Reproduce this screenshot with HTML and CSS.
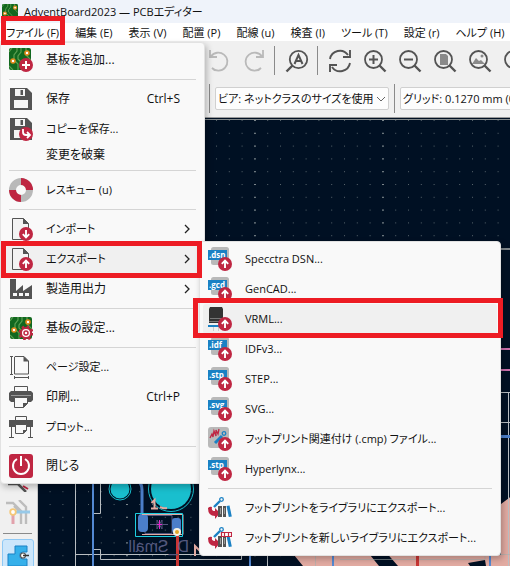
FILE: index.html
```html
<!DOCTYPE html>
<html lang="ja">
<head>
<meta charset="utf-8">
<meta name="viewport" content="width=device-width, initial-scale=1">
<title>AdventBoard2023 — PCBエディター</title>
<link rel="stylesheet" href="styles.css">
</head>
<body>
<svg class="defs" aria-hidden="true">
  <defs>
    <symbol id="up" viewBox="0 0 14 14"><circle cx="7" cy="7" r="7" fill="#bf2642"/><path d="M7 11V4M3.8 6.8 7 3.6l3.2 3.2" fill="none" stroke="#fff" stroke-width="1.9"/></symbol>
    <symbol id="board" viewBox="0 0 22 22"><rect width="22" height="22" rx="2" fill="#12681f"/><path d="M8 0v3L5 7v5l4 4v6M12 0v4L9 8v3l5 5v6M17 0v7l5 5M0 4l3-4M0 18l4 4" fill="none" stroke="#5aa052" stroke-width="1.2"/><circle cx="4" cy="13" r="2" fill="#fff" stroke="#e08a1c" stroke-width="1.6"/><circle cx="18" cy="5" r="2" fill="#fff" stroke="#e08a1c" stroke-width="1.6"/></symbol>
    <symbol id="page" viewBox="0 0 24 24"><path d="M3.5 1.5h11l5 5v16h-16z" fill="#f3f3f3" stroke="#545454"/><path d="M14 1v6h6z" fill="#545454"/></symbol>
    <symbol id="floppy" viewBox="0 0 24 24"><path d="M1 1h17l5 5v17H1z" fill="#545454"/><path d="M6 2h10v7H6zM5 13h14v8H5z" fill="#f5f5f5"/><path d="M11.500 3h2.500v5h-2.500z" fill="#545454"/></symbol>
    <symbol id="library" viewBox="0 0 24 24"><path d="M0 12q2-2 4-1-1 4 3 4v-3l5 5-5 6v-3q-7 0-7-8z" fill="#bf2642"/><path d="M6 11 12 5" stroke="#1a81c4" stroke-width="2.400"/><circle cx="13.500" cy="3.500" r="1.800" fill="none" stroke="#1a81c4" stroke-width="1.300"/><path d="M10 10h4v11h-4zM15 10h3v11h-3z" fill="#545454"/><path d="M12.500 12v6M16.500 12v6" stroke="#999"/><path d="m18.500 10 3-.6 2.300 11-3 .6z" fill="#1a81c4"/></symbol>
    <symbol id="lens" viewBox="0 0 24 24"><circle cx="10.500" cy="10.500" r="8.500" fill="none" stroke="#545454" stroke-width="1.800"/><path d="m16.500 16.500 6 6" stroke="#545454" stroke-width="2.400"/></symbol>
    <symbol id="chev" viewBox="0 0 8 10"><path d="m2 1 4 4-4 4" fill="none" stroke="#222" stroke-width="1.300"/></symbol>
    <symbol id="tag" viewBox="0 0 24 24"><rect x="3" y="0" width="18" height="18" rx="2.500" fill="#b9b9b9"/><rect y="3" width="19" height="10" fill="#1a81c4"/></symbol>
  </defs>
</svg>
<div class="app">
  <header class="titlebar">
    <svg class="app-icon"><use href="#board"/></svg>
    <h1>AdventBoard2023 — PCBエディター</h1>
  </header>
  <nav class="menubar" aria-label="メニュー">
    <button>ファイル (F)</button><button>編集 (E)</button><button>表示 (V)</button><button>配置 (P)</button><button>配線 (u)</button><button>検査 (I)</button><button>ツール (T)</button><button>設定 (r)</button><button>ヘルプ (H)</button>
  </nav>
  <div class="toolbar">
    <button class="tool" aria-label="元に戻す"><svg viewBox="0 0 24 24"><path d="M3 1v7h7M4 7.500a9 9 0 1 1 1 11.500l3 2.500" fill="none" stroke="#b9b9b9" stroke-width="1.800"/></svg></button>
    <button class="tool" aria-label="やり直す"><svg viewBox="0 0 24 24"><path d="M21 1v7h-7M20 7.500a9 9 0 1 0-1 11.500l-3 2.500" fill="none" stroke="#b9b9b9" stroke-width="1.800"/></svg></button>
    <i class="divider"></i>
    <button class="tool" aria-label="検索"><svg viewBox="0 0 24 24"><circle cx="13.500" cy="10.500" r="8.700" fill="none" stroke="#545454" stroke-width="1.800"/><path d="m7.500 16.500-6 6" stroke="#545454" stroke-width="2.400"/><path d="m9.500 15 4-9 4 9M11 12h5" fill="none" stroke="#545454" stroke-width="2"/></svg></button>
    <i class="divider"></i>
    <button class="tool" aria-label="更新"><svg viewBox="0 0 24 24"><path d="M2 10a10 10 0 0 1 18-4M22 1v7h-7M22 14a10 10 0 0 1-18 4M2 23v-7h7" fill="none" stroke="#545454" stroke-width="1.900"/></svg></button>
    <button class="tool" aria-label="拡大"><svg viewBox="0 0 24 24"><use href="#lens"/><path d="M10.500 6v9M6 10.500h9" stroke="#545454" stroke-width="2"/></svg></button>
    <button class="tool" aria-label="縮小"><svg viewBox="0 0 24 24"><use href="#lens"/><path d="M6 10.500h9" stroke="#545454" stroke-width="2"/></svg></button>
    <button class="tool" aria-label="ページに合わせる"><svg viewBox="0 0 24 24"><path d="M7 5h6l2 2v9H7z" fill="#8a8a8a"/><use href="#lens"/></svg></button>
    <button class="tool" aria-label="オブジェクトに合わせる"><svg viewBox="0 0 24 24"><path d="m4 15 4-6 3 3 2-1 4 4z" fill="#8a8a8a"/><circle cx="14" cy="7" r="1.500" fill="#8a8a8a"/><use href="#lens"/></svg></button>
    <button class="tool" aria-label="選択範囲に合わせる"><svg viewBox="0 0 24 24"><use href="#lens"/></svg></button>
  </div>
  <div class="toolbar options">
    <i class="divider"></i>
    <label class="combo via"><select aria-label="ビア"><option>ビア: ネットクラスのサイズを使用</option></select><svg viewBox="0 0 10 6"><path d="m1 1 4 4 4-4" fill="none" stroke="#666"/></svg></label>
    <i class="divider"></i>
    <label class="combo grid"><select aria-label="グリッド"><option>グリッド: 0.1270 mm (0.0050 in)</option></select></label>
  </div>
  <main class="workspace">
    <aside class="sidebar">
      <button class="side" aria-label="測定"><svg viewBox="0 0 24 24"><path d="M2 16h10l8 8" fill="none" stroke="#545454" stroke-width="2.500"/><path d="m17 18 5 3" stroke="#bf2642" stroke-width="2"/></svg></button>
      <button class="side" aria-label="配線表示"><svg viewBox="0 0 24 24"><path d="M0 3h7l8 8v13M8 6l6 6M13 0l7 7v17" fill="none" stroke="#bdbdbd" stroke-width="2.400"/><path d="M7 12v12" stroke="#e2a2ac" stroke-width="3"/><path d="M7 12h17" stroke="#97c9e8" stroke-width="3"/><circle cx="7" cy="12" r="2.800" fill="#fff" stroke="#f5c878" stroke-width="1.800"/></svg></button>
      <i class="rule"></i>
      <button class="side active" aria-label="塗りつぶし表示"><svg viewBox="0 0 24 24"><path d="M9 3h12v6h-4a3.500 3.500 0 0 0 0 7h4v7H2V11h7z" fill="#36b0ea" stroke="#1a81c4"/><circle cx="17" cy="12.500" r="2.500" fill="#fff" stroke="#555" stroke-width="1.200"/><path d="M17 12.500h6" stroke="#333" stroke-width="1.500"/></svg></button>
    </aside>
    <svg class="canvas" role="img" aria-label="基板">
      <defs><pattern id="dots" x="216" y="120" width="12.800" height="12.800" patternUnits="userSpaceOnUse"><rect width="1" height="1" fill="#56636b"/></pattern>
      <pattern id="major" x="254" y="120" width="128" height="12.800" patternUnits="userSpaceOnUse"><rect width="2" height="1" fill="#7c868b"/></pattern></defs>
      <g transform="translate(-38 -118)">
        <rect x="38" y="120" width="3000" height="3000" fill="url(#dots)"/><rect x="38" y="120" width="3000" height="3000" fill="url(#major)"/>
        <path d="M38 119.500h3000" stroke="#83898b"/>
        <path d="M501 504l12-9v71H303l-9-11h207z" fill="#e2aba2"/>
        <path d="M366 550h18l14 16h-19zM468 563l17-3 1 6h-16z" fill="#001023"/>
        <path d="M75.500 484v82M75.500 554.500H200M100.500 484v29.500h-8v36h8v10H241.500V550M267.500 556v10M508.500 392v174M500 392.500h10M500 422.500h10" fill="none" stroke="#b9bec2"/>
        <path d="M315.500 556v10M340 559.500h145v-5M490 554.500h20" fill="none" stroke="#a9b3b0" opacity=".6"/>
        <path d="M500 249h10" stroke="#7f878b" stroke-width="2"/>
        <path d="M500 349h10M500 370h10" stroke="#cb70ad" stroke-width="2"/>
        <path d="M93 484v82M250 550v16M333 550v16M490 550v16" stroke="#5389d3" stroke-width="2"/>
        <path d="M500 436.500h10" stroke="#4b7ec9" stroke-width="3"/>
        <g fill="#19bfce"><circle cx="120" cy="489" r="9.500"/><circle cx="171" cy="489" r="20"/></g>
        <g fill="none" stroke="#19bfce"><circle cx="120" cy="489" r="11"/><circle cx="171" cy="489" r="22.500"/></g>
        <path d="M151 508.500h7M154.500 508v-8l-3 3M160 507q4 2 7 1" fill="none" stroke="#e2aba2" stroke-width="2"/>
        <path d="M136 480q6 2 6 10v27" fill="none" stroke="#4b7ec9" stroke-width="3"/>
        <path d="M145 515.500h27v18h-27zM150 524.500h18M157 520v9M162 520v9M157 520l5 9M162 520l-5 9" fill="none" stroke="#54557c"/>
        <rect x="138" y="514" width="10" height="18" rx="4" fill="#4b7ec9"/><rect x="172" y="518" width="9" height="15" rx="3" fill="#4b7ec9"/>
        <path d="M142 514.500h41v20h-41" fill="none" stroke="#e2aba2"/>
        <path d="M135.500 513.500h47v23h-47z" fill="none" stroke="#1dcee0"/>
        <path d="M157 524.500h5M159.500 520v9" stroke="#e527d0"/>
        <path d="M177.500 533v33" stroke="#c93634" stroke-width="3"/><path d="M417.500 550v16" stroke="#c93634" stroke-width="3"/>
        <circle cx="177" cy="532" r="4" fill="#f4f1e4"/><circle cx="177" cy="532" r="2" fill="#dfa72a"/>
        <text class="ref" transform="translate(189 552) scale(-1 1)">D_Small</text>
        <path d="M195 556v-10l6 6" fill="none" stroke="#e2aba2" stroke-width="2"/>
      </g>
    </svg>
  </main>

  <div class="menu file-menu" role="menu">
    <button role="menuitem"><svg viewBox="0 0 24 24"><use href="#board" width="22" height="22"/><circle cx="17" cy="17" r="7" fill="#bf2642"/><path d="M17 13v8M13 17h8" stroke="#fff" stroke-width="2"/></svg><span>基板を追加...</span></button>
    <hr>
    <button role="menuitem"><svg><use href="#floppy"/></svg><span>保存</span><kbd>Ctrl+S</kbd></button>
    <button role="menuitem" class="kana"><svg viewBox="0 0 24 24"><use href="#floppy"/><circle cx="17" cy="17" r="7" fill="#bf2642"/><path d="M14 12v3q0 3 3 3h4M18 15l3 3-3 3" fill="none" stroke="#fff" stroke-width="1.800"/></svg><span>コピーを保存...</span></button>
    <button role="menuitem" class="plain"><span>変更を破棄</span></button>
    <hr>
    <button role="menuitem" class="kana"><svg viewBox="0 0 24 24"><circle cx="12" cy="12" r="8.500" fill="none" stroke="#b9b9b9" stroke-width="7"/><path d="M12 3.500a8.500 8.500 0 0 1 8.500 8.500M12 20.500a8.500 8.500 0 0 1-8.500-8.500" fill="none" stroke="#bf2642" stroke-width="7"/></svg><span>レスキュー (u)</span></button>
    <hr>
    <button role="menuitem" class="kana"><svg viewBox="0 0 24 24"><use href="#page"/><use href="#up" width="14" height="14" transform="translate(10 24) scale(1 -1)"/></svg><span>インポート</span><svg class="arrow"><use href="#chev"/></svg></button>
    <button role="menuitem" class="kana hover"><svg viewBox="0 0 24 24"><use href="#page"/><use href="#up" x="10" y="10" width="14" height="14"/></svg><span>エクスポート</span><svg class="arrow"><use href="#chev"/></svg></button>
    <button role="menuitem"><svg viewBox="0 0 24 24"><path d="M1 2h6v12l7-6v6l9-6v14H1z" fill="#545454"/><path d="M4 16h4v3H4zM10 16h4v3h-4zM16 16h4v3h-4z" fill="#f9f9f9"/></svg><span>製造用出力</span><svg class="arrow"><use href="#chev"/></svg></button>
    <hr>
    <button role="menuitem"><svg viewBox="0 0 24 24"><use href="#board" x="1" y="1" width="22" height="22"/><circle cx="17" cy="17" r="5" fill="#fff" stroke="#bf2642" stroke-width="2"/><circle cx="17" cy="17" r="6.500" fill="none" stroke="#bf2642" stroke-width="2" stroke-dasharray="2.500 2.600"/><circle cx="17" cy="17" r="2" fill="none" stroke="#bf2642" stroke-width="1.500"/></svg><span>基板の設定...</span></button>
    <hr>
    <button role="menuitem" class="kana"><svg viewBox="0 0 24 24"><path d="M6 1.500h9l4.500 4.500v13H5.500v-17zM1 1.500h3M1 19.500h3M2.500 1v19M5.500 21v3M19.500 21v3M5 22.500h15" fill="none" stroke="#545454"/><path d="M14.500 1v5.500H20z" fill="#545454"/></svg><span>ページ設定...</span></button>
    <button role="menuitem"><svg viewBox="0 0 24 24"><path d="M5.500 1.500h13v5h-13z" fill="#f9f9f9" stroke="#545454"/><path d="M2 6h20l2 2v7l-2 2H2l-2-2V8z" fill="#545454"/><path d="M2 10.500h20" stroke="#999"/><path d="M5.500 12.500h13v6l-4 4h-9z" fill="#f9f9f9" stroke="#545454"/><path d="M14 23v-5h5z" fill="#545454"/></svg><span>印刷...</span><kbd>Ctrl+P</kbd></button>
    <button role="menuitem" class="kana"><svg viewBox="0 0 24 24"><path d="M6.500 1.500h11v4h-11z" fill="#f9f9f9" stroke="#545454"/><path d="M0 5h24v7H0z" fill="#545454"/><path d="M2.500 12v10M21.500 12v10M0 22.500h5M19 22.500h5" stroke="#545454"/><path d="M6.500 9.500h11v6l-3 3h-8z" fill="#f9f9f9" stroke="#545454"/><path d="M14 19v-4h4z" fill="#545454"/></svg><span>プロット...</span></button>
    <hr>
    <button role="menuitem"><svg viewBox="0 0 24 24"><rect width="24" height="24" rx="3" fill="#bf2642"/><path d="M8 5a8 8 0 1 0 8 0M12 2v10" fill="none" stroke="#fff" stroke-width="2"/></svg><span>閉じる</span></button>
  </div>

  <div class="menu sub-menu" role="menu">
    <button role="menuitem"><svg viewBox="0 0 24 24"><use href="#tag"/><text x="1" y="11">.dsn</text><use href="#up" x="10" y="10" width="14" height="14"/></svg><span>Specctra DSN...</span></button>
    <button role="menuitem"><svg viewBox="0 0 24 24"><use href="#tag"/><text x="1" y="11">.gcd</text><use href="#up" x="10" y="10" width="14" height="14"/></svg><span>GenCAD...</span></button>
    <button role="menuitem" class="hover"><svg viewBox="0 0 24 24"><path d="M2 0h12l1 2v11l1 3H1V2z" fill="#333"/><path d="M2 11.500h13M1 14.500h14" stroke="#777"/><path d="M0 19h12" stroke="#1a81c4" stroke-width="2"/><path d="M5.500 20v4M10.500 20v4" stroke="#ccc"/><use href="#up" x="10" y="10" width="14" height="14"/></svg><span>VRML...</span></button>
    <button role="menuitem"><svg viewBox="0 0 24 24"><use href="#tag"/><text x="1" y="11">.idf</text><use href="#up" x="10" y="10" width="14" height="14"/></svg><span>IDFv3...</span></button>
    <button role="menuitem"><svg viewBox="0 0 24 24"><use href="#tag"/><text x="1" y="11">.stp</text><use href="#up" x="10" y="10" width="14" height="14"/></svg><span>STEP...</span></button>
    <button role="menuitem"><svg viewBox="0 0 24 24"><use href="#tag"/><text x="1" y="11">.svg</text><use href="#up" x="10" y="10" width="14" height="14"/></svg><span>SVG...</span></button>
    <button role="menuitem"><svg viewBox="0 0 24 24"><rect width="21" height="21" rx="3" fill="#b9b9b9"/><path d="m2 11 2-4 1 3 1-6 2 5V3l2 4 1-5" fill="none" stroke="#bf2642" stroke-width="1.300"/><path d="m7 16 7-7" stroke="#1a81c4" stroke-width="3"/><circle cx="16" cy="6.500" r="1.800" fill="none" stroke="#1a81c4" stroke-width="1.300"/><use href="#up" x="10" y="10" width="14" height="14"/></svg><span>フットプリント関連付け (.cmp) ファイル...</span></button>
    <button role="menuitem"><svg viewBox="0 0 24 24"><use href="#tag"/><text x="1" y="11">.stp</text><use href="#up" x="10" y="10" width="14" height="14"/></svg><span>Hyperlynx...</span></button>
    <hr>
    <button role="menuitem"><svg><use href="#library"/></svg><span>フットプリントをライブラリにエクスポート...</span></button>
    <button role="menuitem"><svg viewBox="0 0 24 24"><use href="#library"/><path d="M13.500 6.500h10v4h-10zM16.500 6v5M20.500 6v5" fill="#fff" stroke="#bf2642" stroke-width="1.200"/></svg><span>フットプリントを新しいライブラリにエクスポート...</span></button>
  </div>
  <i class="mark mark-file"></i><i class="mark mark-export"></i><i class="mark mark-vrml"></i>
</div>
</body>
</html>
```
FILE: styles.css
```css
* { box-sizing: border-box; }
body {
  margin: 0;
  font: 11px/16px "Open Sans", "Noto Sans CJK JP", sans-serif;
  font-feature-settings: "palt";
  color: #111;
}
button, select {
  font: inherit;
  font-feature-settings: inherit;
  color: inherit;
  border: 0;
  padding: 0;
  margin: 0;
  background: none;
  white-space: nowrap;
}
.defs { position: absolute; width: 0; height: 0; }
.app {
  position: relative;
  display: flex;
  flex-direction: column;
  height: 100vh;
  overflow: hidden;
  background: #f0f0f0;
}
.titlebar {
  display: flex;
  align-items: center;
  gap: 6px;
  height: 23px;
  padding: 0 2px;
  background: #eff3fa;
}
.titlebar h1 { margin: 0; font-size: 11px; font-weight: 400; }
.app-icon { width: 16px; height: 16px; }
.menubar {
  display: flex;
  flex: none;
  gap: 16px;
  height: 18px;
  padding: 2px 0 0 6px;
  background: #fff;
}
.toolbar {
  display: flex;
  flex: none;
  align-items: center;
  height: 39px;
  padding-left: 201px;
}
.tool { flex: none; width: 35px; height: 24px; }
.tool svg { display: block; width: 24px; height: 24px; margin: 0 auto; }
.divider {
  flex: none;
  width: 2px;
  height: 29px;
  margin: 0 3px;
  border-left: 1px solid #8a8a8a;
}
.options { height: 37px; padding-left: 206px; }
.combo { position: relative; flex: none; margin: 0 2px 0 1px; }
.combo select {
  appearance: none;
  width: 100%;
  height: 23px;
  padding-left: 2px;
  border: 1px solid #d0d0d0;
  border-radius: 2px;
  background: #fdfdfd;
}
.combo svg { position: absolute; right: 3px; top: 9px; width: 10px; height: 6px; }
.via { width: 174px; }
.grid { width: 200px; }
.workspace {
  display: flex;
  flex: 1;
  min-height: 0;
  border-top: 1px solid #9a9a9a;
}
.sidebar {
  display: flex;
  flex: none;
  flex-direction: column;
  align-items: center;
  width: 38px;
  padding: 346px 2px 0 0;
  border-right: 1px solid #c8c8c8;
  overflow: hidden;
}
.side { flex: none; width: 32px; height: 32px; }
.side svg { display: block; width: 24px; height: 24px; margin: 0 auto; }
.rule { flex: none; width: 29px; height: 1px; margin: 5px 0; background: #8a8a8a; }
.active { border: 1px solid #8fc9f5; border-radius: 3px; background: #cce6fb; }
.canvas { flex: 1; min-width: 0; height: 100%; background: #001023; }
.ref { font: 16px "Liberation Sans", sans-serif; fill: #54597f; }

.menu {
  position: absolute;
  display: flex;
  flex-direction: column;
  padding: 2px 3px;
  border: 1px solid #e2e2e2;
  border-radius: 4px;
  background: #f9f9f9;
  box-shadow: 2px 3px 6px rgba(0, 0, 0, .25);
}
.file-menu { left: 0; top: 42px; width: 205px; font-size: 12px; }
.sub-menu { left: 199px; top: 241px; width: 302px; }
.menu button {
  display: flex;
  align-items: center;
  gap: 13px;
  height: 30px;
  padding: 0 10px 0 5px;
  border-radius: 3px;
  text-align: left;
}
.menu .kana { font-size: 11px; }
.menu button > svg { flex: none; width: 24px; height: 24px; }
.menu span { flex: 1; }
.menu kbd { flex: none; margin-right: 11px; font: inherit; }
.menu button > .arrow { width: 8px; height: 10px; }
.menu .plain { height: 22px; padding-left: 42px; }
.menu .hover { background: #f0f0f0; }
.menu hr {
  width: auto;
  height: 1px;
  margin: 4px 5px;
  border: 0;
  background: #d5d5d5;
}
.menu text { font: 700 8px "Open Sans", sans-serif; fill: #fff; }
.mark { position: absolute; border: 5px solid #ed1c24; pointer-events: none; }
.mark-file { left: 1px; top: 16px; width: 64px; height: 29px; }
.mark-export { left: 1px; top: 241px; width: 201px; height: 37px; }
.mark-vrml { left: 193px; top: 298px; width: 310px; height: 40px; }
```
